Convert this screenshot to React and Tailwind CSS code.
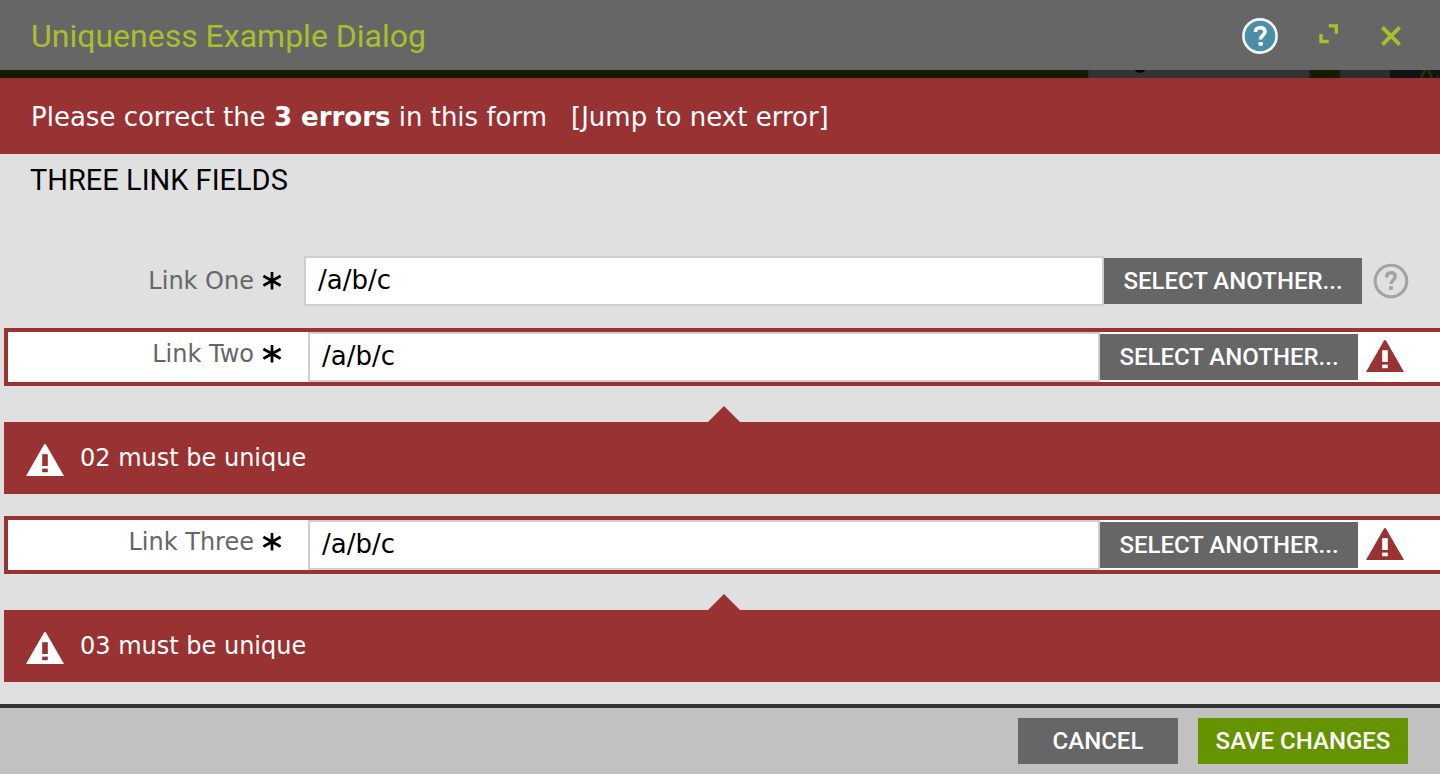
import React from "react";

const HEADING = "font-['Roboto',sans-serif]";

function HelpBadge() {
  return (
    <svg viewBox="0 0 36 36" className="size-9" aria-hidden="true">
      <circle cx="18" cy="18" r="16.6" fill="#4a8fa3" stroke="#f2f7f8" strokeWidth="2.6" />
      <path d="M13.400 14C13.400 10.800 15.400 9.800 18.400 9.800C21.400 9.800 23 11.300 23 13.600C23 17.200 18.600 17 18.600 21.600" fill="none" stroke="#fff" strokeWidth="3.600" />
      <rect x="16.600" y="24" width="4.200" height="3.600" fill="#fff" />
    </svg>
  );
}

function ExpandIcon() {
  return (
    <svg viewBox="0 0 20 20" className="size-5" fill="none" stroke="#a9bf2b" strokeWidth="3.400" aria-hidden="true">
      <path d="M9.700 1.900H17.300V9.800" />
      <path d="M2 10V17.500H9.800" />
    </svg>
  );
}

function CloseIcon() {
  return (
    <svg viewBox="0 0 20 20" className="size-5" fill="none" stroke="#a9bf2b" strokeWidth="3.800" aria-hidden="true">
      <path d="M1.400 1.400L18.600 18.600M18.600 1.400L1.400 18.600" />
    </svg>
  );
}

function FieldHelpIcon() {
  return (
    <svg viewBox="0 0 36 36" className="size-9" fill="none" stroke="#a3a3a3" aria-hidden="true">
      <circle cx="18" cy="18" r="15.800" strokeWidth="3" />
      <path d="M13.600 14.400C13.600 11 15.400 9.800 18 9.800C20.700 9.800 22.200 11.400 22.200 13.600C22.200 17 18 17 18 21" strokeWidth="3.400" />
      <rect x="16" y="23.200" width="3.800" height="3.600" fill="#a3a3a3" stroke="none" />
    </svg>
  );
}

function WarningIcon({ color, mark }) {
  return (
    <svg viewBox="0 0 38 32" className="h-8 w-[38px] shrink-0" aria-hidden="true">
      <path d="M17.600 1.200Q19 -1 20.400 1.200L38 32H0Z" fill={color} />
      <rect x="16.200" y="10.200" width="5.600" height="11.800" fill={mark} />
      <rect x="16.200" y="24.600" width="5.600" height="3.600" fill={mark} />
    </svg>
  );
}

function RequiredMark() {
  return (
    <svg viewBox="0 0 20 20" className="size-5 shrink-0" stroke="#000" strokeWidth="2.700" aria-hidden="true">
      <path d="M10 1V18.500M1.400 5L18.600 14.500M18.600 5L1.400 14.500" />
    </svg>
  );
}

function LinkInput({ id }) {
  return (
    <div className="flex min-w-0 flex-1 items-center">
      <input
        id={id}
        type="text"
        defaultValue="/a/b/c"
        className="h-[50px] min-w-0 flex-1 border-2 border-[#cfcfcf] bg-white px-3 pb-0.5 text-[26px] text-black outline-none"
      />
      <button type="button" className={`h-[46px] w-[258px] shrink-0 bg-[#666666] text-2xl font-medium whitespace-nowrap text-white ${HEADING}`}>
        SELECT ANOTHER...
      </button>
    </div>
  );
}

function FieldLabel({ id, children }) {
  return (
    <label htmlFor={id} className="flex h-11 items-center justify-end gap-2 text-2xl text-[#666666]">
      {children}
      <RequiredMark />
    </label>
  );
}

function InvalidField({ id, label, message }) {
  return (
    <div className="ml-1">
      <div className="flex h-[58px] items-start border-4 border-r-0 border-[#993232] bg-white">
        <div className="w-[300px] shrink-0 pr-[26px]">
          <FieldLabel id={id}>{label}</FieldLabel>
        </div>
        <LinkInput id={id} />
        <div className="w-[82px] shrink-0 pt-2 pl-2">
          <WarningIcon color="#993232" mark="#fff" />
        </div>
      </div>
      <div className="mt-5">
        <div className="flex justify-center pl-1">
          <svg viewBox="0 0 32 16" className="h-4 w-8" aria-hidden="true">
            <path d="M0 16L16 0L32 16Z" fill="#993232" />
          </svg>
        </div>
        <p className="flex h-[72px] items-center gap-4 bg-[#993232] px-[22px] text-2xl text-white">
          <span className="pt-1">
            <WarningIcon color="#fff" mark="#993232" />
          </span>
          {message}
        </p>
      </div>
    </div>
  );
}

export default function App() {
  return (
    <div className="flex min-h-screen flex-col bg-[#e0e0e0] font-['DejaVu_Sans',sans-serif]">
      <header className="flex h-[70px] items-center justify-between bg-[#666666] pt-0.5 pr-[39px] pl-[31px]">
        <h1 className={`text-[32px] text-[#a9bf2b] ${HEADING}`}>Uniqueness Example Dialog</h1>
        <div className="flex items-center">
          <button type="button" aria-label="Help" className="mr-[41px]">
            <HelpBadge />
          </button>
          <button type="button" aria-label="Expand" className="mr-[42px] pb-1">
            <ExpandIcon />
          </button>
          <button type="button" aria-label="Close">
            <CloseIcon />
          </button>
        </div>
      </header>

      <div className="flex h-2 bg-[#151c02]" aria-hidden="true">
        <div className="flex-1" />
        <div className="w-[222px] border-x-2 border-[#2b2b2e] bg-[#333333] pl-11">
          <svg viewBox="0 0 12 8" className="h-2 w-3">
            <path d="M1 0C2 3.500 10 3.500 11 0" fill="#000" />
          </svg>
        </div>
        <div className="w-[30px]" />
        <div className="w-[50px] bg-[#2d2d2d]" />
        <div className="w-[50px] bg-[#131313] pl-7">
          <svg viewBox="0 0 20 8" className="h-2 w-5" fill="none" stroke="#2a3008" strokeWidth="2.500">
            <path d="M3 8L7 0M14 8L10 0M20 4V8" />
          </svg>
        </div>
      </div>

      <div role="alert" className="flex h-[76px] items-center gap-6 bg-[#993232] px-[31px] pt-0.5 text-[26px] text-white">
        <p>
          Please correct the <strong className="font-bold">3 errors</strong> in this form
        </p>
        <a href="#link-two">[Jump to next error]</a>
      </div>

      <form id="links" className="flex flex-1 flex-col gap-[22px] pb-[22px]">
        <h2 className={`h-20 pt-2 pl-[30px] text-[29px] leading-9 text-black ${HEADING}`}>THREE LINK FIELDS</h2>
        <div className="flex items-center">
          <div className="w-[304px] shrink-0 pr-[22px]">
            <FieldLabel id="link-one">Link One</FieldLabel>
          </div>
          <LinkInput id="link-one" />
          <div className="w-[78px] shrink-0 pl-[11px]">
            <FieldHelpIcon />
          </div>
        </div>
        <InvalidField id="link-two" label="Link Two" message="02 must be unique" />
        <InvalidField id="link-three" label="Link Three" message="03 must be unique" />
      </form>

      <footer className={`flex h-[70px] items-center justify-end gap-5 border-t-4 border-[#303232] bg-[#c1c1c1] px-8 text-2xl font-medium text-white ${HEADING}`}>
        <button type="button" className="h-[46px] w-40 bg-[#666666]">CANCEL</button>
        <button type="submit" form="links" className="h-[46px] w-[210px] bg-[#669400] whitespace-nowrap">SAVE CHANGES</button>
      </footer>
    </div>
  );
}
